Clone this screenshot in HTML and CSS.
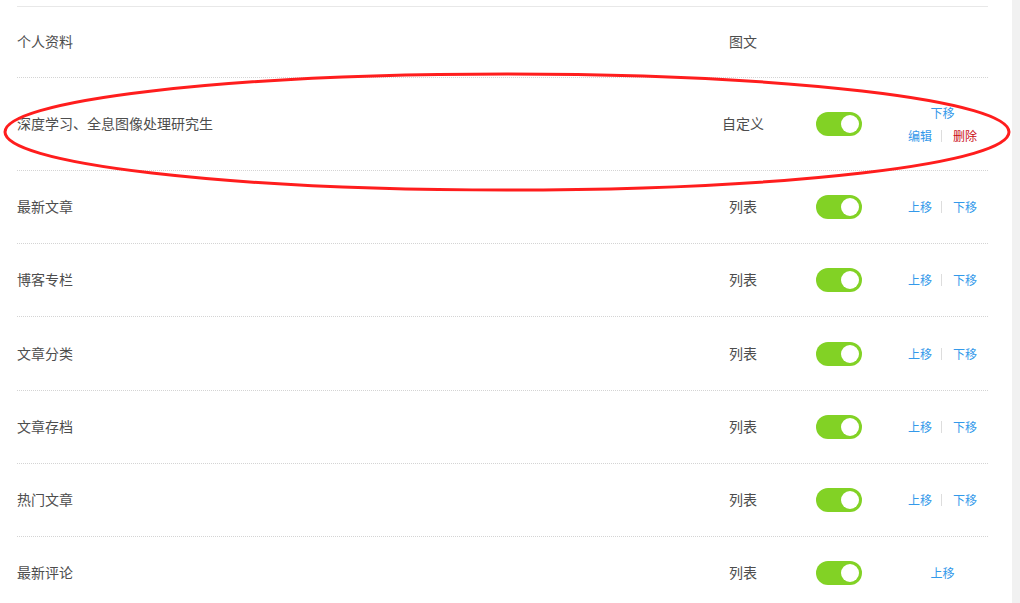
FILE: index.html
```html
<!DOCTYPE html>
<html lang="zh-CN">
<head>
<meta charset="utf-8">
<title>模块管理</title>
<link rel="stylesheet" href="styles.css">
</head>
<body>
<div class="page">
  <div class="main">
    <div class="list">
      <div class="row row-first">
        <div class="name">个人资料</div>
        <div class="type">图文</div>
        <div class="sw-cell"></div>
        <div class="actions"></div>
      </div>
      <div class="row row-tall">
        <div class="name">深度学习、全息图像处理研究生</div>
        <div class="type">自定义</div>
        <div class="sw-cell"><span class="switch"><span class="knob"></span></span></div>
        <div class="actions stack">
          <div class="line"><a class="link">下移</a></div>
          <div class="line"><a class="link">编辑</a><span class="sep"></span><a class="link danger">删除</a></div>
        </div>
      </div>
      <div class="row">
        <div class="name">最新文章</div>
        <div class="type">列表</div>
        <div class="sw-cell"><span class="switch"><span class="knob"></span></span></div>
        <div class="actions"><a class="link">上移</a><span class="sep"></span><a class="link">下移</a></div>
      </div>
      <div class="row">
        <div class="name">博客专栏</div>
        <div class="type">列表</div>
        <div class="sw-cell"><span class="switch"><span class="knob"></span></span></div>
        <div class="actions"><a class="link">上移</a><span class="sep"></span><a class="link">下移</a></div>
      </div>
      <div class="row row-plus">
        <div class="name">文章分类</div>
        <div class="type">列表</div>
        <div class="sw-cell"><span class="switch"><span class="knob"></span></span></div>
        <div class="actions"><a class="link">上移</a><span class="sep"></span><a class="link">下移</a></div>
      </div>
      <div class="row">
        <div class="name">文章存档</div>
        <div class="type">列表</div>
        <div class="sw-cell"><span class="switch"><span class="knob"></span></span></div>
        <div class="actions"><a class="link">上移</a><span class="sep"></span><a class="link">下移</a></div>
      </div>
      <div class="row">
        <div class="name">热门文章</div>
        <div class="type">列表</div>
        <div class="sw-cell"><span class="switch"><span class="knob"></span></span></div>
        <div class="actions"><a class="link">上移</a><span class="sep"></span><a class="link">下移</a></div>
      </div>
      <div class="row">
        <div class="name">最新评论</div>
        <div class="type">列表</div>
        <div class="sw-cell"><span class="switch"><span class="knob"></span></span></div>
        <div class="actions"><a class="link">上移</a></div>
      </div>
    </div>
    <svg class="mark" width="1012" height="603" viewBox="0 0 1012 603" aria-hidden="true">
      <ellipse cx="507" cy="132" rx="502" ry="58" fill="none" stroke="#ff1d1d" stroke-width="3"/>
    </svg>
  </div>
  <div class="scrollbar"></div>
</div>
</body>
</html>
```

FILE: styles.css
```css
html, body {
  margin: 0;
  padding: 0;
  background: #ffffff;
  height: 100%;
  overflow: hidden;
}

body {
  font-family: "Microsoft YaHei", "Noto Sans CJK SC", "Noto Sans", sans-serif;
  color: #4d4d4d;
  font-size: 14px;
}

.page {
  display: flex;
  height: 603px;
}

.main {
  position: relative;
  flex: 1;
  padding: 6px 0 0 17px;
}

.scrollbar {
  width: 8px;
  background: #f1f1f1;
}

.list {
  width: 971px;
  border-top: 1px solid #e8e8e8;
}

.row {
  display: grid;
  grid-template-columns: 1fr 80px 113px 92px;
  align-items: center;
  height: 72px;
  border-bottom: 1px dotted #d4d4d4;
}

.row-first {
  height: 70px;
}

.row-tall {
  height: 92px;
}

.row-plus {
  height: 73px;
}

.name {
  line-height: 20px;
  padding-bottom: 2px;
}

.type {
  text-align: center;
  line-height: 20px;
  padding-bottom: 2px;
}

.sw-cell {
  display: flex;
  justify-content: center;
  padding-right: 1px;
}

.switch {
  display: flex;
  justify-content: flex-end;
  align-items: center;
  width: 46px;
  height: 24px;
  border-radius: 12px;
  background: #82d225;
  padding: 0 3px;
  box-sizing: border-box;
}

.knob {
  width: 18px;
  height: 18px;
  border-radius: 50%;
  background: #ffffff;
}

.actions {
  display: flex;
  justify-content: center;
  align-items: center;
  font-size: 12px;
  line-height: 16px;
  padding-left: 1px;
}

.actions.stack {
  flex-direction: column;
  gap: 7px;
}

.line {
  display: flex;
  align-items: center;
}

.link {
  color: #3399ea;
  cursor: pointer;
}

.link.danger {
  color: #ca0c16;
}

.sep {
  width: 1px;
  height: 12px;
  background: #dddddd;
  margin: 0 11px 0 9px;
}

.mark {
  position: absolute;
  left: 0;
  top: 0;
  pointer-events: none;
}
```
